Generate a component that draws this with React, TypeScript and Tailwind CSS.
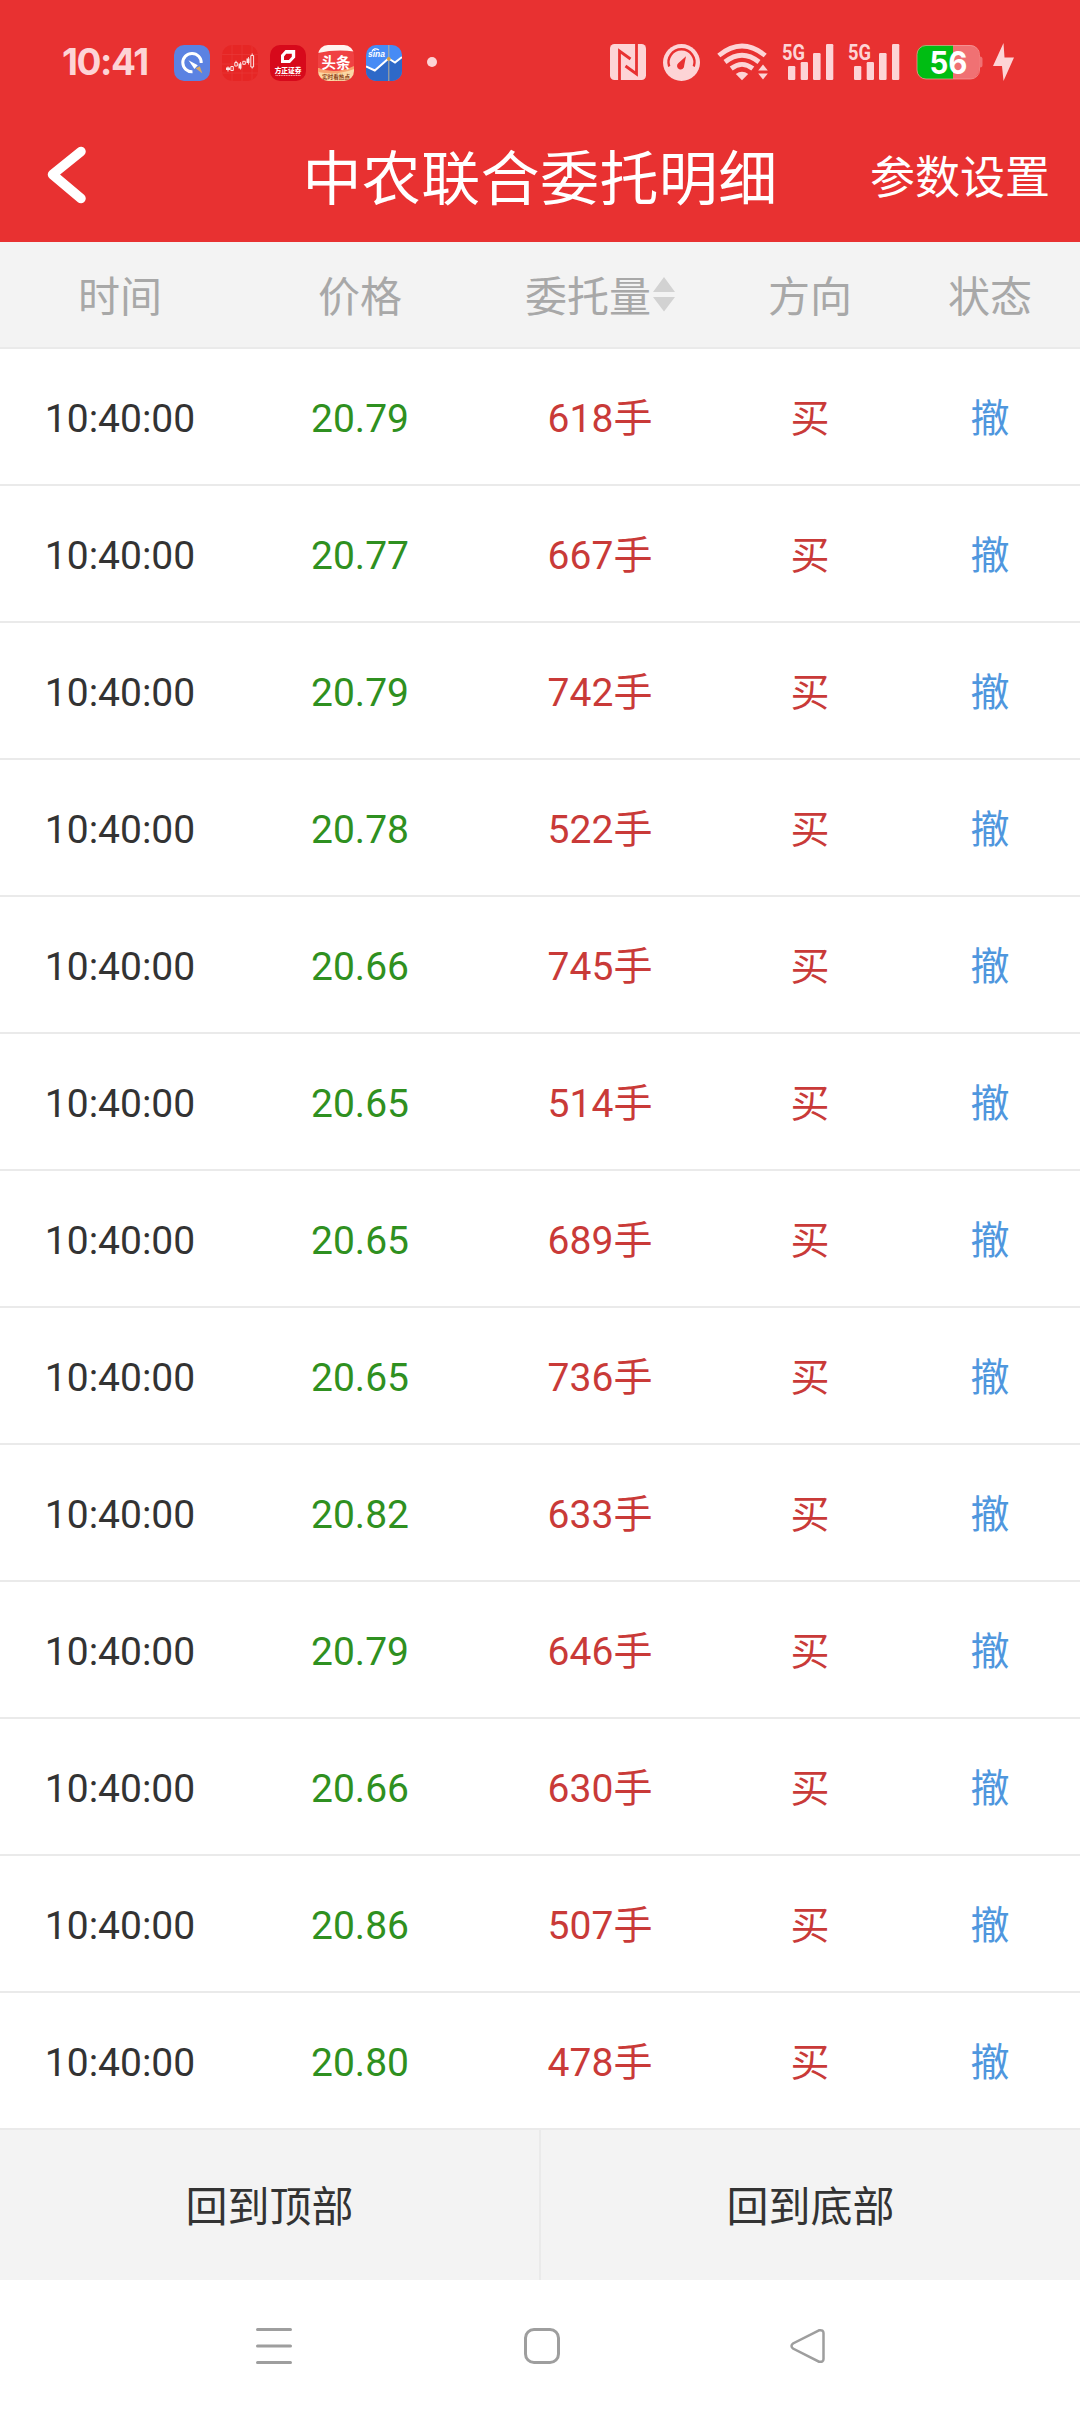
import type { ReactNode } from "react";

interface Order {
  time: string;
  price: string;
  amount: number;
}

const orders: Order[] = [
  { time: "10:40:00", price: "20.79", amount: 618 },
  { time: "10:40:00", price: "20.77", amount: 667 },
  { time: "10:40:00", price: "20.79", amount: 742 },
  { time: "10:40:00", price: "20.78", amount: 522 },
  { time: "10:40:00", price: "20.66", amount: 745 },
  { time: "10:40:00", price: "20.65", amount: 514 },
  { time: "10:40:00", price: "20.65", amount: 689 },
  { time: "10:40:00", price: "20.65", amount: 736 },
  { time: "10:40:00", price: "20.82", amount: 633 },
  { time: "10:40:00", price: "20.79", amount: 646 },
  { time: "10:40:00", price: "20.66", amount: 630 },
  { time: "10:40:00", price: "20.86", amount: 507 },
  { time: "10:40:00", price: "20.80", amount: 478 },
];

const cjk = "Noto Sans CJK SC, sans-serif";

const AppIcon = ({ className, children }: { className: string; children: ReactNode }) => (
  <svg viewBox="0 0 36 36" className={`size-9 rounded-[10px] ${className}`}>
    {children}
  </svg>
);

const AppIcons = () => (
  <div className="flex gap-3">
    <AppIcon className="bg-[#5b82e2]">
      <path
        d="M18.5 26.8A9.2 9.2 0 1 1 27.2 18"
        fill="none"
        stroke="#fff"
        strokeWidth="3"
      />
      <path d="M14.5 15.2 23.8 20.2 20.4 24Z" fill="#fff" />
      <path d="M21.6 23.2 25.8 21.2 28.4 28.4Z" fill="#d8a864" />
    </AppIcon>
    <AppIcon className="bg-[#e62625]">
      <path
        d="M0 9.5H36M0 19H36M0 28H36M10 0V36M20 0V36M30 0V36"
        stroke="#ea3c3a"
        strokeWidth=".6"
      />
      <g fill="#fde4e4">
        <path d="M4 22.5h4v2.500h-4zM5.500 21.500h1v5h-1zM16.500 18.500h3v5h-3zM18 17h.8v7.500h-.8zM24.500 13.500h3v4.500h-3zM26 12h.8v7.500h-.8z" />
      </g>
      <g fill="none" stroke="#fde4e4">
        <path d="M8.800 21.500h2.500v4h-2.500zM12.800 17.500h2.500v3.500h-2.500zM14 15.800v1.700M20.800 16.300h2.500v3h-2.500zM28.800 10.500h2.800v11.500h-2.800zM30.200 8.500v2M30.200 22v1.500" />
      </g>
    </AppIcon>
    <AppIcon className="bg-[#d7091b]">
      <path
        d="M15.500 5H25.200V12.500L20 18H11V10ZM16.200 8.800 14 11.500V15H18.800L21.800 11.800V8.800Z"
        fill="#fff"
        fillRule="evenodd"
      />
      <text x="18" y="28" textAnchor="middle" fontSize="6.7" fontWeight="900" fill="#fff" fontFamily={cjk}>
        方正证券
      </text>
      <path d="M5.500 30.500H31" stroke="#f6a4aa" strokeWidth="1" strokeDasharray="1.200 .5" />
    </AppIcon>
    <AppIcon className="bg-[#f04142]">
      <path d="M0 0H36V6.500Q18 4 0 8Z" fill="#fff4ef" />
      <path d="M0 23Q18 32 36 22V36H0Z" fill="#fbd7a3" />
      <path d="M0 23Q18 30 36 21V24Q18 31 0 27Z" fill="#f9a36d" />
      <text x="18" y="23" textAnchor="middle" fontSize="14.500" fontWeight="700" fill="#fff" fontFamily={cjk}>
        头条
      </text>
      <text x="18" y="34.300" textAnchor="middle" fontSize="5.600" fontWeight="700" fill="#8a4218" fontFamily={cjk}>
        实时看热点
      </text>
    </AppIcon>
    <AppIcon className="bg-[#478bf5]">
      <path d="M0 21 9 25 22.500 13 29 17 36 11V36H0Z" fill="#2e69c8" />
      <path d="M0 21.500 8.800 25.500 22.500 13.500 29 17.500 36 12" fill="none" stroke="#fff" strokeWidth="2" />
      <path d="M22.800 0V36" stroke="#c7b58f" strokeWidth=".9" />
      <circle cx="22.800" cy="13.800" r="1.900" fill="#e0a33f" />
      <path d="M6 6.500Q8 2 13 5" fill="none" stroke="#fff" strokeWidth="1.300" />
      <text
        x="2"
        y="12"
        fontSize="8.500"
        fontStyle="italic"
        fontWeight="700"
        textLength="17"
        lengthAdjust="spacingAndGlyphs"
        fill="#fff"
        fontFamily="Liberation Sans, sans-serif"
      >
        sina
      </text>
    </AppIcon>
  </div>
);

const Signal = () => (
  <svg viewBox="0 0 52 48" className="h-12 w-[52px] overflow-visible">
    <text
      x="0"
      y="21.500"
      fontSize="21.500"
      fontWeight="700"
      textLength="23"
      lengthAdjust="spacingAndGlyphs"
      fontFamily="Roboto, sans-serif"
      fill="currentColor"
    >
      5G
    </text>
    <g fill="currentColor">
      <rect x="6" y="28" width="7.300" height="14" rx="1.200" />
      <rect x="18.700" y="24" width="7.300" height="18" rx="1.200" />
      <rect x="31" y="15" width="7.600" height="27" rx="1.200" />
      <rect x="44" y="6" width="7.300" height="36" rx="1.200" />
    </g>
  </svg>
);

const StatusBar = () => (
  <div className="flex h-[114px] items-center pt-3 pl-[62px] text-[#fdd4d6]">
    <span className="-mt-[3px] w-28 font-[Inter,sans-serif] text-[37px] leading-none font-bold tracking-[-1.4px]">
      10:41
    </span>
    <AppIcons />
    <span className="-mt-0.5 ml-[25px] size-2.5 rounded-full bg-current" />
    <div className="-mt-0.5 ml-[173px] flex items-center">
      {/* NFC */}
      <svg viewBox="0 0 36 36" className="size-9">
        <rect width="36" height="36" rx="4.500" fill="currentColor" />
        <path
          d="M9.500 36V7L20.500 15M26.500 0V30L15.500 22"
          fill="none"
          stroke="#e83131"
          strokeWidth="2.800"
        />
      </svg>
      {/* speed gauge */}
      <svg viewBox="0 0 37 37" className="ml-[17px] size-[37px]">
        <circle cx="18.500" cy="18.500" r="18.500" fill="currentColor" />
        <path
          d="M6.200 22.500A13 13 0 1 1 30.800 22.500"
          fill="none"
          stroke="#e83131"
          strokeWidth="2.400"
        />
        <path d="M23 12.300 21.200 21.500A3.600 3.600 0 1 1 15.200 19.200Z" fill="#e83131" />
      </svg>
      <svg viewBox="0 0 52 38" className="ml-[17px] h-[38px] w-[52px]">
        <g fill="none" stroke="currentColor" strokeWidth="4.800">
          <path d="M1.800 12.500Q25 -6.500 48.200 12.500" />
          <path d="M8 19Q25 5.500 42 19" />
          <path d="M14.200 25.500Q25 17.200 35.800 25.500" />
        </g>
        <path d="M18.800 31Q25 26.300 31.200 31L25 37.300Z" fill="currentColor" />
        <path d="M46 21.500 50.800 27.500H41.200ZM46 36.500 50.800 30.500H41.200Z" fill="currentColor" />
      </svg>
      <div className="ml-[13px] flex gap-[14px]">
        <Signal />
        <Signal />
      </div>
      <svg viewBox="0 0 67 36" className="ml-4 h-9 w-[67px]">
        <path d="M37 1H54A9 9 0 0 1 63 10V26A9 9 0 0 1 54 35H37Z" fill="#f07173" />
        <path d="M37 1H10A9 9 0 0 0 1 10V26A9 9 0 0 0 10 35H37Z" fill="#00bd13" />
        <rect x="1" y="1.500" width="62.500" height="33.500" rx="9" fill="none" stroke="#f6a1a0" strokeOpacity=".7" />
        <path d="M63.500 12.500H64Q66.500 12.500 66.500 15V21Q66.500 23.500 64 23.500H63.500Z" fill="#f07173" />
        <text
          x="32.500"
          y="29.500"
          textAnchor="middle"
          fontSize="31"
          fontWeight="700"
          textLength="38"
          lengthAdjust="spacingAndGlyphs"
          fill="#fff"
          fontFamily="Inter, sans-serif"
        >
          56
        </text>
      </svg>
      <svg viewBox="0 0 21 38" className="ml-2.5 h-[38px] w-[21px]">
        <path d="M10.500 0 0 23H9L10.500 38 21 14.500H11.500Z" fill="currentColor" />
      </svg>
    </div>
  </div>
);

const Header = () => (
  <div className="grid h-32 grid-cols-[1fr_auto_1fr] items-center text-white">
    <svg viewBox="0 0 40 58" className="-mt-[7px] ml-[46px] h-[58px] w-10">
      <path
        d="M35 5.500 6.500 28.500 35 52.500"
        fill="none"
        stroke="currentColor"
        strokeWidth="9.500"
        strokeLinecap="round"
        strokeLinejoin="round"
      />
    </svg>
    <h1 className="pt-0.5 text-[59px] leading-none tracking-[0.4px]">中农联合委托明细</h1>
    <span className="justify-self-end pt-px pr-[30px] text-[45px] leading-none">参数设置</span>
  </div>
);

const columns = "grid grid-cols-[240px_240px_240px_180px_180px] items-center text-center";

const App = () => {
  return (
    <div className="flex h-[2412px] w-[1080px] flex-col overflow-hidden bg-white font-[Roboto,'Noto_Sans_CJK_SC',sans-serif] text-[#333333]">
      <header className="h-[242px] bg-[#e83131]">
        <StatusBar />
        <Header />
      </header>

      <div
        className={`${columns} h-[107px] border-b-2 border-[#eaeaea] bg-[#f3f3f3] pt-1.5 text-[42px] leading-none text-[#a8a8a8]`}
      >
        <span>时间</span>
        <span>价格</span>
        <span className="flex items-center justify-center gap-0.5">
          委托量
          <svg viewBox="0 0 22 35" className="-mt-1.5 h-[35px] w-[22px]" fill="#d2d2d2">
            <path d="M11 0 22 15H0ZM0 20H22L11 34.500Z" />
          </svg>
        </span>
        <span>方向</span>
        <span>状态</span>
      </div>

      {orders.map((order, i) => (
        <div
          key={i}
          className={`${columns} h-[137px] border-b-2 border-[#eaeaea] pt-1.5 text-[39px] leading-none`}
        >
          <span>{order.time}</span>
          <span className="text-[#2f9020]">{order.price}</span>
          <span className="text-[#c93a38]">{order.amount}手</span>
          <span className="text-[#c93a38]">买</span>
          <span className="text-[#4f97de]">撤</span>
        </div>
      ))}

      <div className="grid h-[150px] grid-cols-2 bg-[#f3f3f3] text-[42px] leading-none">
        <button className="border-r border-[#eaeaea] pt-1.5">回到顶部</button>
        <button className="border-l border-[#eaeaea] pt-1.5">回到底部</button>
      </div>

      <nav className="flex h-[132px] items-center pl-[256px] text-[#9e9e9e]">
        <svg viewBox="0 0 36 36" className="size-9">
          <path
            d="M1.500 1.500H34.500M1.500 18H34.500M1.500 34.500H34.500"
            stroke="currentColor"
            strokeWidth="3"
            strokeLinecap="round"
          />
        </svg>
        <span className="ml-[232px] size-9 rounded-[10px] border-3 border-current" />
        <svg viewBox="0 0 35 36" className="ml-[230px] h-9 w-[35px]">
          <path
            d="M29 2.300 3 15.500Q0 18 3 20.500L29 33.700Q33.500 34.500 33.500 31V5Q33.500 1.500 29 2.300Z"
            fill="none"
            stroke="currentColor"
            strokeWidth="2.500"
          />
        </svg>
      </nav>
    </div>
  );
};

export default App;
